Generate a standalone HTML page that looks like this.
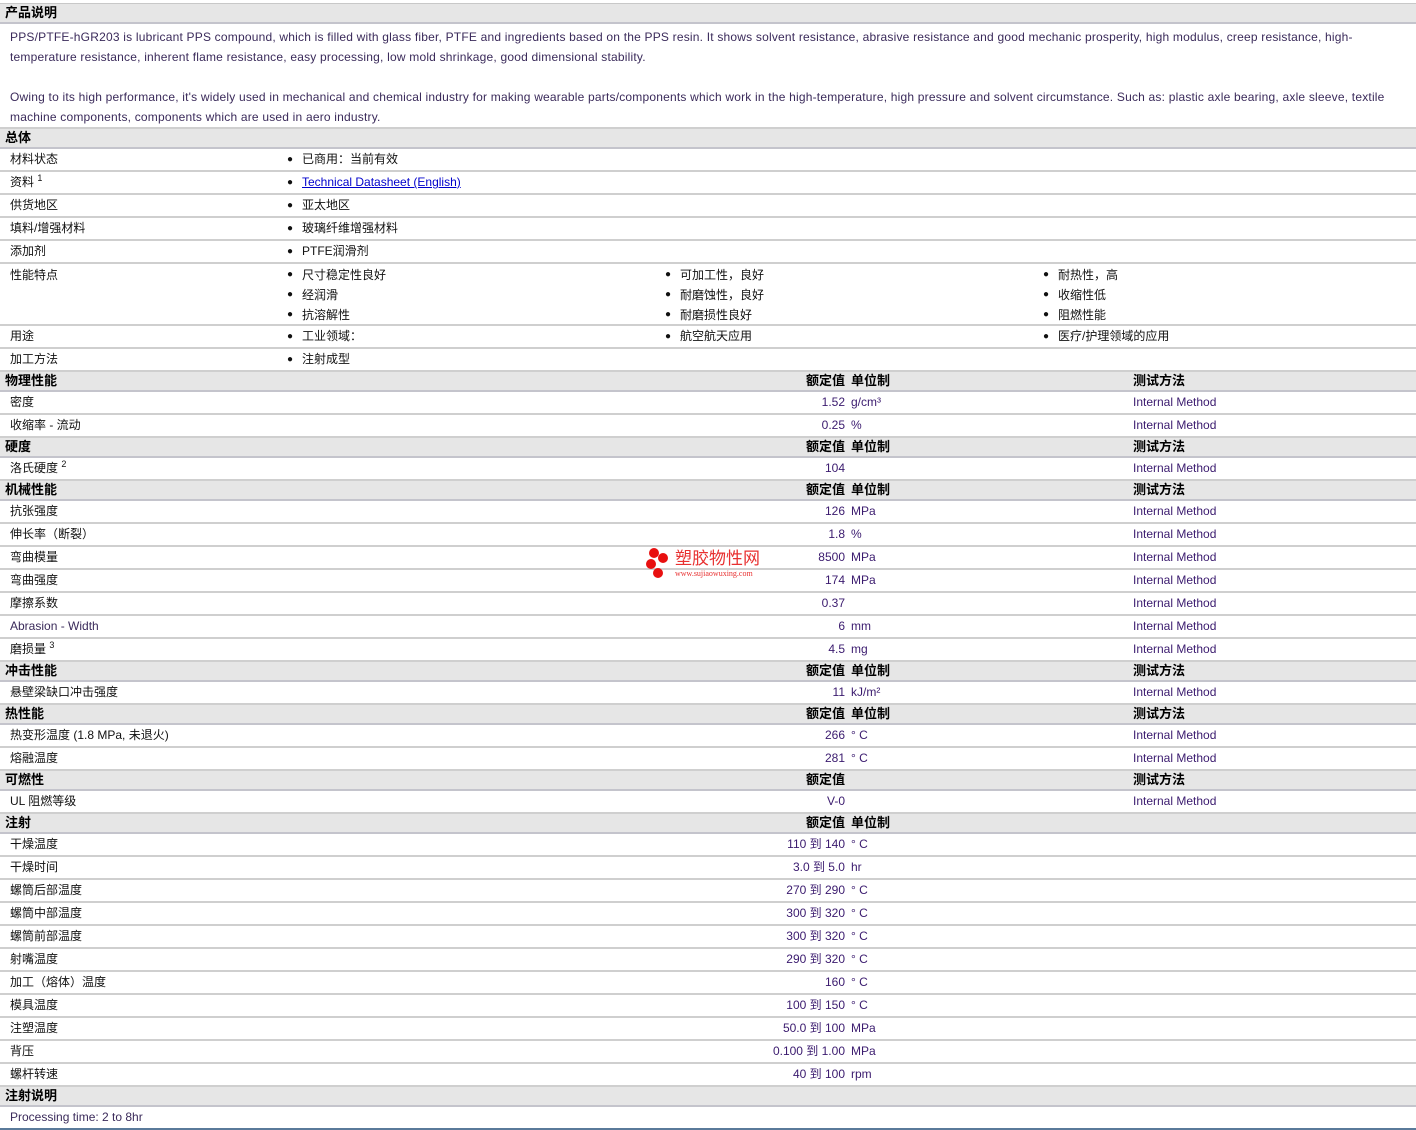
<!DOCTYPE html>
<html><head><meta charset="utf-8">
<style>
*{margin:0;padding:0;box-sizing:border-box}
body{width:1416px;height:1130px;background:#fff;font-family:"Liberation Sans","Noto Sans CJK SC",sans-serif;font-size:12px;color:#111;position:relative;overflow:hidden}
.top{height:4px;border-bottom:1px solid #c8c8c8}
.h{position:relative;height:20px;background:#e6e6e6;border-bottom:2px solid #c4c4cc;font-weight:bold;font-size:13px;line-height:18px;color:#000}
.r{position:relative;height:23px;border-bottom:2px solid #cfcfcf;line-height:21px}
.r span,.h span{position:absolute;top:0;white-space:nowrap}
.l{left:10px}
.hl{left:5px}
.v{right:571px;color:#3a1a6e}
.u{left:851px;color:#3a1a6e}
.m{left:1133px;color:#3a1a6e}
.b1{left:302px}.b2{left:680px}.b3{left:1058px}
.d1{left:287px}.d2{left:665px}.d3{left:1043px}
.dot{font-size:10px}
.desc{position:relative;height:105px;border-bottom:2px solid #cfcfcf;padding:3px 30px 0 10px;line-height:20px;color:#3a2a5a;letter-spacing:0.2px}
.desc p{white-space:nowrap}
sup{font-size:9px;vertical-align:top;position:relative;top:-4px}
a{color:#0000cc}
.wm{position:absolute;left:645px;top:547px;width:140px;height:40px}
</style></head><body>
<div class="top"></div>
<div class="h"><span class="hl">产品说明</span></div>
<div class="desc"><p>PPS/PTFE-hGR203 is lubricant PPS compound, which is filled with glass fiber, PTFE and ingredients based on the PPS resin. It shows solvent resistance, abrasive resistance and good mechanic prosperity, high modulus, creep resistance, high-</p><p>temperature resistance, inherent flame resistance, easy processing, low mold shrinkage, good dimensional stability.</p><br><p>Owing to its high performance, it's widely used in mechanical and chemical industry for making wearable parts/components which work in the high-temperature, high pressure and solvent circumstance. Such as: plastic axle bearing, axle sleeve, textile</p><p>machine components, components which are used in aero industry.</p></div>
<div class="h"><span class="hl">总体</span></div>
<div class="r"><span class="l">材料状态</span><span class="d1 dot">●</span><span class="b1">已商用：当前有效</span></div>
<div class="r"><span class="l">资料 <sup>1</sup></span><span class="d1 dot">●</span><span class="b1"><a href="#">Technical Datasheet (English)</a></span></div>
<div class="r"><span class="l">供货地区</span><span class="d1 dot">●</span><span class="b1">亚太地区</span></div>
<div class="r"><span class="l">填料/增强材料</span><span class="d1 dot">●</span><span class="b1">玻璃纤维增强材料</span></div>
<div class="r"><span class="l">添加剂</span><span class="d1 dot">●</span><span class="b1">PTFE润滑剂</span></div>
<div class="r" style="height:62px;line-height:20px"><span class="l" style="top:1px">性能特点</span>
<span class="d1 dot" style="top:1px">●</span><span class="b1" style="top:1px">尺寸稳定性良好</span>
<span class="d1 dot" style="top:21px">●</span><span class="b1" style="top:21px">经润滑</span>
<span class="d1 dot" style="top:41px">●</span><span class="b1" style="top:41px">抗溶解性</span>
<span class="d2 dot" style="top:1px">●</span><span class="b2" style="top:1px">可加工性，良好</span>
<span class="d2 dot" style="top:21px">●</span><span class="b2" style="top:21px">耐磨蚀性，良好</span>
<span class="d2 dot" style="top:41px">●</span><span class="b2" style="top:41px">耐磨损性良好</span>
<span class="d3 dot" style="top:1px">●</span><span class="b3" style="top:1px">耐热性，高</span>
<span class="d3 dot" style="top:21px">●</span><span class="b3" style="top:21px">收缩性低</span>
<span class="d3 dot" style="top:41px">●</span><span class="b3" style="top:41px">阻燃性能</span></div>
<div class="r"><span class="l">用途</span><span class="d1 dot">●</span><span class="b1">工业领域：</span><span class="d2 dot">●</span><span class="b2">航空航天应用</span><span class="d3 dot">●</span><span class="b3">医疗/护理领域的应用</span></div>
<div class="r"><span class="l">加工方法</span><span class="d1 dot">●</span><span class="b1">注射成型</span></div>
<div class="h"><span class="hl">物理性能</span><span class="v" style="color:#000">额定值</span><span class="u" style="color:#000">单位制</span><span class="m" style="color:#000">测试方法</span></div>
<div class="r"><span class="l">密度</span><span class="v">1.52</span><span class="u">g/cm³</span><span class="m">Internal Method</span></div>
<div class="r"><span class="l">收缩率 - 流动</span><span class="v">0.25</span><span class="u">%</span><span class="m">Internal Method</span></div>
<div class="h"><span class="hl">硬度</span><span class="v" style="color:#000">额定值</span><span class="u" style="color:#000">单位制</span><span class="m" style="color:#000">测试方法</span></div>
<div class="r"><span class="l">洛氏硬度 <sup>2</sup></span><span class="v">104</span><span class="m">Internal Method</span></div>
<div class="h"><span class="hl">机械性能</span><span class="v" style="color:#000">额定值</span><span class="u" style="color:#000">单位制</span><span class="m" style="color:#000">测试方法</span></div>
<div class="r"><span class="l">抗张强度</span><span class="v">126</span><span class="u">MPa</span><span class="m">Internal Method</span></div>
<div class="r"><span class="l">伸长率（断裂）</span><span class="v">1.8</span><span class="u">%</span><span class="m">Internal Method</span></div>
<div class="r"><span class="l">弯曲模量</span><span class="v">8500</span><span class="u">MPa</span><span class="m">Internal Method</span></div>
<div class="r"><span class="l">弯曲强度</span><span class="v">174</span><span class="u">MPa</span><span class="m">Internal Method</span></div>
<div class="r"><span class="l">摩擦系数</span><span class="v">0.37</span><span class="m">Internal Method</span></div>
<div class="r"><span class="l" style="color:#3a2a5a">Abrasion - Width</span><span class="v">6</span><span class="u">mm</span><span class="m">Internal Method</span></div>
<div class="r"><span class="l">磨损量 <sup>3</sup></span><span class="v">4.5</span><span class="u">mg</span><span class="m">Internal Method</span></div>
<div class="h"><span class="hl">冲击性能</span><span class="v" style="color:#000">额定值</span><span class="u" style="color:#000">单位制</span><span class="m" style="color:#000">测试方法</span></div>
<div class="r"><span class="l">悬壁梁缺口冲击强度</span><span class="v">11</span><span class="u">kJ/m²</span><span class="m">Internal Method</span></div>
<div class="h"><span class="hl">热性能</span><span class="v" style="color:#000">额定值</span><span class="u" style="color:#000">单位制</span><span class="m" style="color:#000">测试方法</span></div>
<div class="r"><span class="l">热变形温度 (1.8 MPa, 未退火)</span><span class="v">266</span><span class="u">° C</span><span class="m">Internal Method</span></div>
<div class="r"><span class="l">熔融温度</span><span class="v">281</span><span class="u">° C</span><span class="m">Internal Method</span></div>
<div class="h"><span class="hl">可燃性</span><span class="v" style="color:#000">额定值</span><span class="m" style="color:#000">测试方法</span></div>
<div class="r"><span class="l">UL 阻燃等级</span><span class="v">V-0</span><span class="m">Internal Method</span></div>
<div class="h"><span class="hl">注射</span><span class="v" style="color:#000">额定值</span><span class="u" style="color:#000">单位制</span></div>
<div class="r"><span class="l">干燥温度</span><span class="v">110 到 140</span><span class="u">° C</span></div>
<div class="r"><span class="l">干燥时间</span><span class="v">3.0 到 5.0</span><span class="u">hr</span></div>
<div class="r"><span class="l">螺筒后部温度</span><span class="v">270 到 290</span><span class="u">° C</span></div>
<div class="r"><span class="l">螺筒中部温度</span><span class="v">300 到 320</span><span class="u">° C</span></div>
<div class="r"><span class="l">螺筒前部温度</span><span class="v">300 到 320</span><span class="u">° C</span></div>
<div class="r"><span class="l">射嘴温度</span><span class="v">290 到 320</span><span class="u">° C</span></div>
<div class="r"><span class="l">加工（熔体）温度</span><span class="v">160</span><span class="u">° C</span></div>
<div class="r"><span class="l">模具温度</span><span class="v">100 到 150</span><span class="u">° C</span></div>
<div class="r"><span class="l">注塑温度</span><span class="v">50.0 到 100</span><span class="u">MPa</span></div>
<div class="r"><span class="l">背压</span><span class="v">0.100 到 1.00</span><span class="u">MPa</span></div>
<div class="r"><span class="l">螺杆转速</span><span class="v">40 到 100</span><span class="u">rpm</span></div>
<div class="h"><span class="hl">注射说明</span></div>
<div class="r" style="border-bottom:2px solid #5a7a9a"><span class="l" style="color:#3a2a5a">Processing time: 2 to 8hr</span></div>
<div class="wm">
<svg width="30" height="36" style="position:absolute;left:0;top:0"><circle cx="9" cy="6" r="5" fill="#e81010"/><circle cx="18" cy="11" r="5" fill="#e81010"/><circle cx="6" cy="17" r="5" fill="#e81010"/><circle cx="13" cy="26" r="5" fill="#e81010"/></svg>
<span style="position:absolute;left:30px;top:2px;font-size:17px;color:#e83030;white-space:nowrap;line-height:20px">塑胶物性网</span>
<span style="position:absolute;left:30px;top:22px;font-size:8px;color:#e83030;font-family:'Liberation Serif',serif;white-space:nowrap">www.sujiaowuxing.com</span>
</div>
</body></html>
